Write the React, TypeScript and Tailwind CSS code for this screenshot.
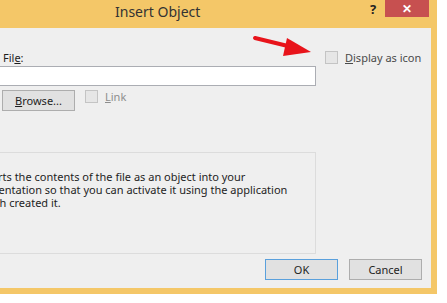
export default function App() {
  const font = { fontFamily: '"Segoe UI", "Noto Sans", "Open Sans", sans-serif' };

  return (
    <div className="w-[447px] h-[303px] bg-white overflow-hidden relative" style={font}>
      <div className="w-[437px] h-[294px] bg-[#f4c768] flex flex-col">
        {/* title bar */}
        <div className="h-[28px] flex items-start shrink-0">
          <div className="w-[370px] pl-[115px] pt-[2px] text-[14px] text-[#333] leading-[20px]">Insert Object</div>
          <div className="w-[15px] pt-[1px] text-[13px] font-bold text-[#222] leading-[16px]">?</div>
          <div className="w-[44px] h-[17px] bg-[#c75050] flex items-center justify-center text-white text-[12px] font-bold leading-none">
            ✕
          </div>
        </div>

        {/* client area */}
        <div className="w-[431px] h-[260px] bg-[#efefef] flex flex-col overflow-hidden">
          <div className="flex">
            {/* left column */}
            <div className="w-[316px] shrink-0 pl-[1px] flex flex-col">
              <div className="mt-[22px] h-[16px] pl-[2px] text-[11px] leading-[16px] text-[#1e1e1e]">
                Fil<span className="underline">e</span>:
              </div>
              <div className="h-[20px] bg-white border border-[#abadb3] border-l-0 -ml-[1px]" />
              <div className="mt-[4px] flex items-start">
                <button className="w-[73px] h-[21px] ml-[1px] bg-[#e1e1e1] border border-[#adadad] text-[11px] leading-[18px] text-[#1e1e1e]">
                  <span className="underline">B</span>rowse...
                </button>
                <div className="ml-[10px] w-[13px] h-[13px] border border-[#c4c4c4] bg-[#e6e6e6]" />
                <span className="ml-[7px] text-[11px] leading-[13px] text-[#8d8d8d]">
                  <span className="underline">L</span>ink
                </span>
              </div>
              {/* result group */}
              <div className="mt-[41px] h-[102px] -ml-[120px] border border-[#dcdcdc] pl-[94px] pt-[17px] text-[11px] leading-[13px] text-[#1e1e1e] whitespace-nowrap">
                <div>Inserts the contents of the file as an object into your</div>
                <div>presentation so that you can activate it using the application</div>
                <div>which created it.</div>
              </div>
            </div>

            {/* right column */}
            <div className="ml-[9px] mt-[23px] flex items-start">
              <div className="w-[13px] h-[13px] border border-[#c4c4c4] bg-[#e6e6e6]" />
              <span className="ml-[7px] text-[11px] leading-[13px] text-[#4a4a4a]">
                <span className="underline">D</span>isplay as icon
              </span>
            </div>
          </div>

          <div className="mt-[5px] flex justify-end gap-[11px] pr-[9px]">
            <button className="w-[73px] h-[21px] bg-[#e1e1e1] border border-[#5aa0dc] text-[11px] leading-[18px] text-[#1e1e1e]">
              OK
            </button>
            <button className="w-[73px] h-[21px] bg-[#e1e1e1] border border-[#adadad] text-[11px] leading-[18px] text-[#1e1e1e]">
              Cancel
            </button>
          </div>
        </div>
      </div>

      {/* annotation arrow */}
      <svg className="absolute left-0 top-0" width="447" height="303">
        <line x1="255" y1="38" x2="292" y2="47" stroke="#e8141b" strokeWidth="4" strokeLinecap="round" />
        <polygon points="287,38 311,52 283,56" fill="#e8141b" />
      </svg>
    </div>
  );
}
